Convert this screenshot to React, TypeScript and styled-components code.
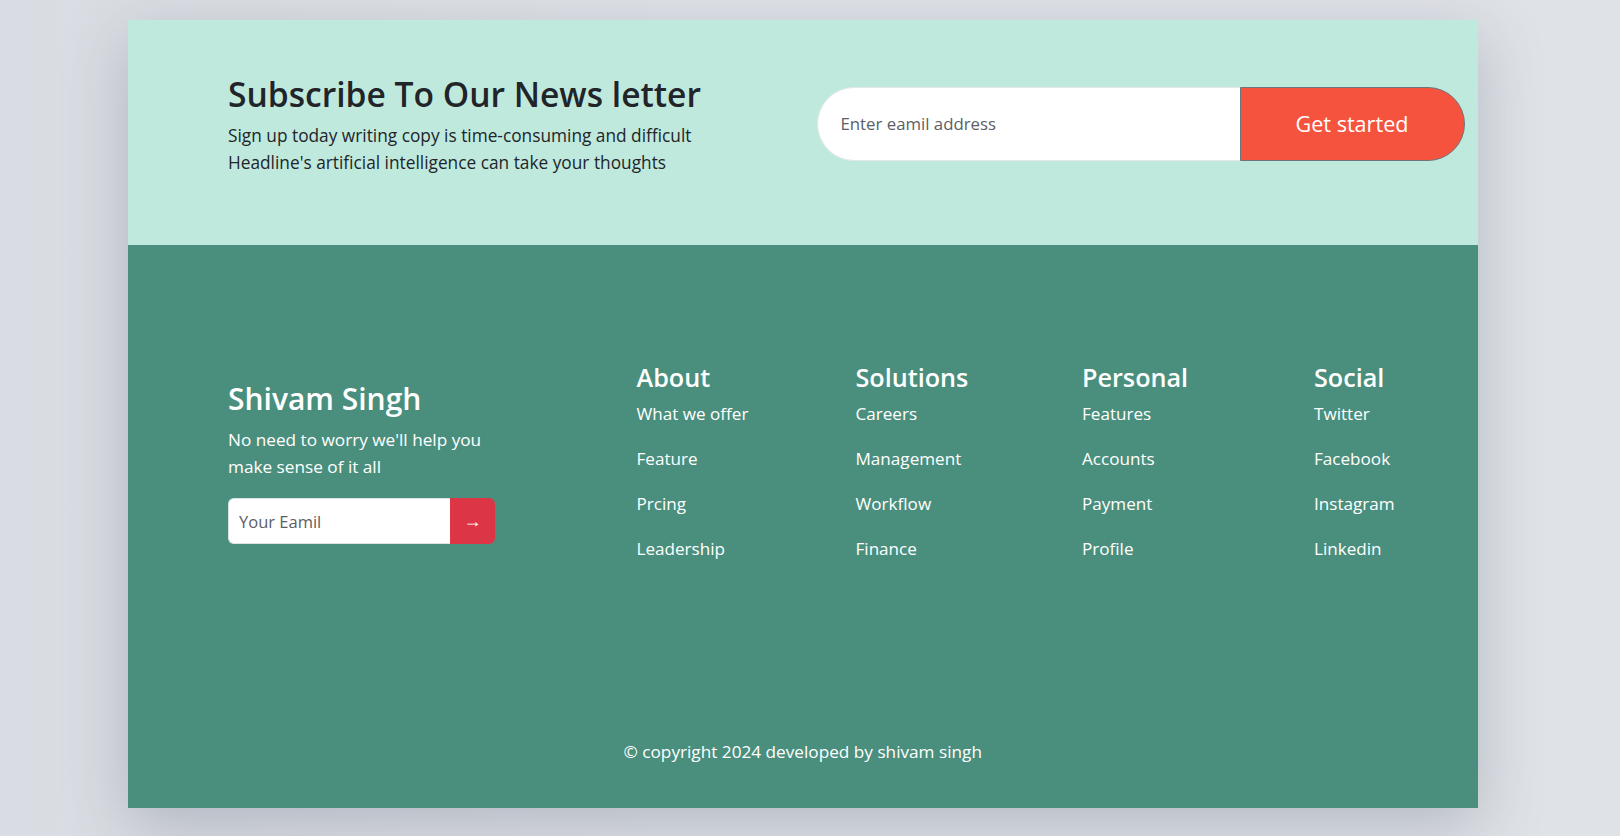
import React from "react";
import styled, { createGlobalStyle } from "styled-components";

const GlobalStyle = createGlobalStyle`
  html, body { margin: 0; padding: 0; }
  body {
    background: #dee1e6;
    font-family: "Open Sans", "Noto Sans", Arial, sans-serif;
    color: #212529;
  }
  * { box-sizing: border-box; }
`;

const Page = styled.div`
  min-height: 836px;
  padding: 19.6px 0 0 128px;
  background: linear-gradient(90deg, #d9dce2 0%, #dfe2e7 40%, #dfe2e7 100%);
`;

const Card = styled.div`
  width: 1349.5px;
  box-shadow: 0 18px 60px rgba(70, 80, 100, 0.28);
`;

const Newsletter = styled.section`
  height: 225.5px;
  background: #c0e9de;
  display: flex;
  padding: 0 13px 0 100px;
`;

const Intro = styled.div`
  padding-top: 55px;
`;

const Title = styled.h2`
  margin: 0 0 8.6px;
  font-size: 33.6px;
  font-weight: 600;
  line-height: 39.6px;
  color: #212529;
`;

const Lead = styled.p`
  margin: 0;
  font-size: 17.3px;
  line-height: 26.8px;
  color: #212529;
`;

const SubscribeForm = styled.form`
  margin: 67.4px 0 0 auto;
  width: 648px;
  height: 74px;
  display: flex;
`;

const EmailInput = styled.input`
  flex: 1;
  min-width: 0;
  height: 100%;
  border: 1px solid #e3e6ea;
  border-right: none;
  border-radius: 37px 0 0 37px;
  background: #fff;
  padding: 0 0 0 23px;
  font-family: inherit;
  font-size: 16.8px;
  color: #212529;
  outline: none;
  &::placeholder { color: #5b6066; }
`;

const StartButton = styled.button`
  width: 225px;
  height: 100%;
  border: 1px solid #6c757d;
  border-radius: 0 37px 37px 0;
  background: #f5533d;
  color: #fff;
  font-family: inherit;
  font-size: 21.6px;
  padding: 0;
  cursor: pointer;
`;

const Footer = styled.footer`
  height: 563px;
  background: #4a8f7d;
  color: #fff;
  padding: 117.6px 0 0 100px;
`;

const FooterRow = styled.div`
  display: grid;
  grid-template-columns: 408.5px 219px 226.5px 232px 1fr;
  align-items: center;
  height: 200px;
`;

const Brand = styled.div`
  width: 267px;
`;

const BrandName = styled.h3`
  margin: 0 0 8.8px;
  font-size: 30px;
  font-weight: 600;
  line-height: 36px;
`;

const BrandText = styled.p`
  margin: 0 0 18.5px;
  font-size: 17.2px;
  line-height: 27px;
`;

const MiniForm = styled.form`
  display: flex;
  height: 46px;
  width: 267px;
`;

const MiniInput = styled.input`
  flex: 1;
  min-width: 0;
  border: 1px solid #dee2e6;
  border-right: none;
  border-radius: 6px 0 0 6px;
  padding: 0 0 0 10px;
  font-family: inherit;
  font-size: 16.5px;
  outline: none;
  &::placeholder { color: #5b6066; }
`;

const MiniButton = styled.button`
  width: 45px;
  border: none;
  border-radius: 0 6px 6px 0;
  background: #dc3545;
  color: #fff;
  font-family: "Liberation Sans", "DejaVu Sans", sans-serif;
  font-size: 18px;
  padding: 0;
  cursor: pointer;
`;

const Column = styled.div`
  display: flex;
  flex-direction: column;
  align-self: start;
`;

const ColumnTitle = styled.h4`
  margin: 0 0 9px;
  font-size: 25.2px;
  font-weight: 600;
  line-height: 28.8px;
`;

const LinkList = styled.ul`
  list-style: none;
  margin: 0;
  padding: 0;
  display: flex;
  flex-direction: column;
  gap: 18px;
`;

const FooterLink = styled.a`
  display: block;
  color: #fff;
  text-decoration: none;
  font-size: 17.1px;
  line-height: 27px;
`;

const Copyright = styled.p`
  margin: 175px 0 0 -100px;
  text-align: center;
  font-size: 17.2px;
  line-height: 27px;
`;

const columns = [
  { title: "About", links: ["What we offer", "Feature", "Prcing", "Leadership"] },
  { title: "Solutions", links: ["Careers", "Management", "Workflow", "Finance"] },
  { title: "Personal", links: ["Features", "Accounts", "Payment", "Profile"] },
  { title: "Social", links: ["Twitter", "Facebook", "Instagram", "Linkedin"] },
];

export default function App() {
  return (
    <>
      <GlobalStyle />
      <Page>
        <Card>
          <Newsletter>
            <Intro>
              <Title>Subscribe To Our News letter</Title>
              <Lead>
                Sign up today writing copy is time-consuming and difficult
                <br />
                Headline's artificial intelligence can take your thoughts
              </Lead>
            </Intro>
            <SubscribeForm onSubmit={(e) => e.preventDefault()}>
              <EmailInput placeholder="Enter eamil address" />
              <StartButton type="submit">Get started</StartButton>
            </SubscribeForm>
          </Newsletter>
          <Footer>
            <FooterRow>
              <Brand>
                <BrandName>Shivam Singh</BrandName>
                <BrandText>No need to worry we'll help you make sense of it all</BrandText>
                <MiniForm onSubmit={(e) => e.preventDefault()}>
                  <MiniInput placeholder="Your Eamil" />
                  <MiniButton type="submit">→</MiniButton>
                </MiniForm>
              </Brand>
              {columns.map((c) => (
                <Column key={c.title}>
                  <ColumnTitle>{c.title}</ColumnTitle>
                  <LinkList>
                    {c.links.map((l) => (
                      <li key={l}>
                        <FooterLink href="#">{l}</FooterLink>
                      </li>
                    ))}
                  </LinkList>
                </Column>
              ))}
            </FooterRow>
            <Copyright>© copyright 2024 developed by shivam singh</Copyright>
          </Footer>
        </Card>
      </Page>
    </>
  );
}
